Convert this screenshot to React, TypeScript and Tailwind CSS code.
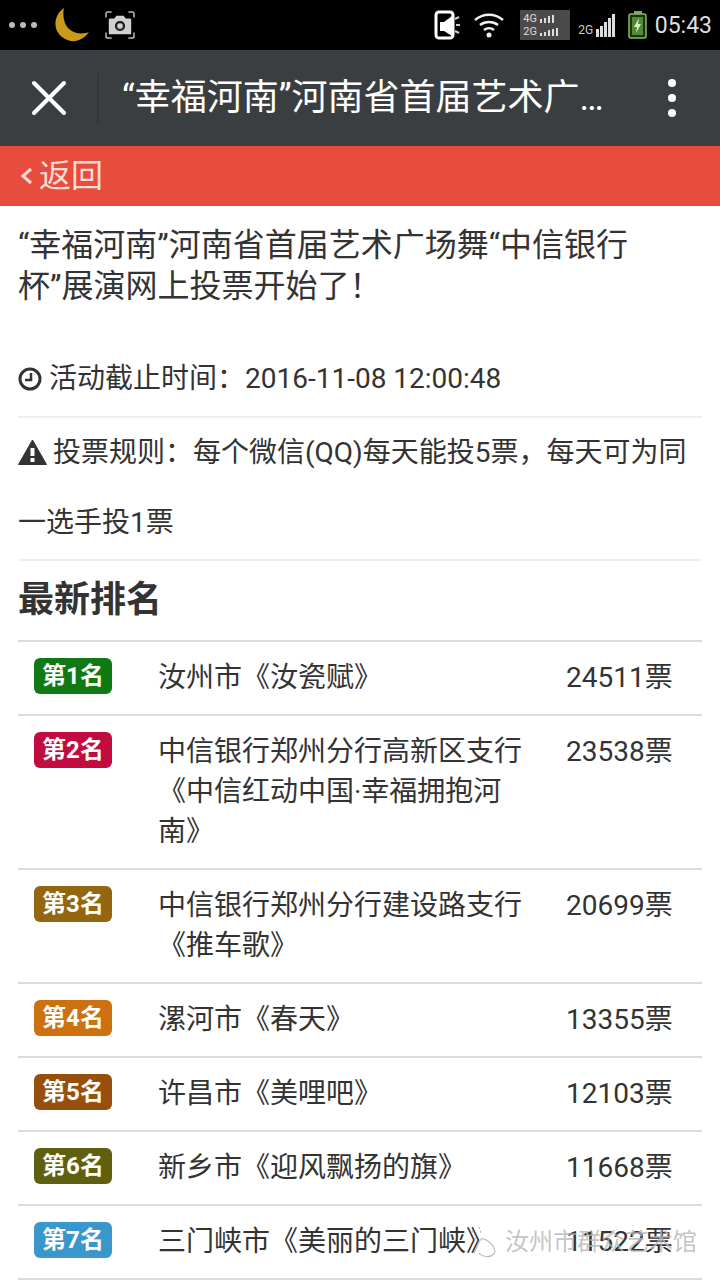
import { X } from "lucide-react";

const rows = [
  { rank: "第1名", color: "bg-[#0f7a14]", name: "汝州市《汝瓷赋》", votes: "24511票" },
  { rank: "第2名", color: "bg-[#c20b3e]", name: "中信银行郑州分行高新区支行《中信红动中国·幸福拥抱河南》", votes: "23538票" },
  { rank: "第3名", color: "bg-[#93660f]", name: "中信银行郑州分行建设路支行《推车歌》", votes: "20699票" },
  { rank: "第4名", color: "bg-[#cc7010]", name: "漯河市《春天》", votes: "13355票" },
  { rank: "第5名", color: "bg-[#97500c]", name: "许昌市《美哩吧》", votes: "12103票" },
  { rank: "第6名", color: "bg-[#5f5f10]", name: "新乡市《迎风飘扬的旗》", votes: "11668票" },
  { rank: "第7名", color: "bg-[#3a97cc]", name: "三门峡市《美丽的三门峡》", votes: "11522票" },
];

function StatusBar() {
  return (
    <div className="h-[50px] bg-black flex items-center pl-[9px] pr-[8px]">
      {/* dots */}
      <div className="flex gap-[5px] w-[30px]">
        <span className="w-[6px] h-[6px] rounded-full bg-[#bbb]" />
        <span className="w-[6px] h-[6px] rounded-full bg-[#bbb]" />
        <span className="w-[6px] h-[6px] rounded-full bg-[#bbb]" />
      </div>
      {/* moon */}
      <svg width="38" height="36" viewBox="0 0 38 36" className="ml-[14px]">
        <path d="M11 1 C1 8 -1 22 9 30 C18 37 29 35 36 25 C25 29 15 24 12 16 C10 10 10 5 11 1Z" fill="#c99a1c" />
      </svg>
      {/* camera */}
      <svg width="30" height="28" viewBox="0 0 32 30" className="ml-[14px]">
        <path d="M1 7V3a2 2 0 0 1 2-2h4M25 1h4a2 2 0 0 1 2 2v4M31 23v4a2 2 0 0 1-2 2h-4M7 29H3a2 2 0 0 1-2-2v-4" fill="none" stroke="#bbb" strokeWidth="1.6" />
        <path d="M5 8h5l2-3h8l2 3h5a1 1 0 0 1 1 1v15a1 1 0 0 1-1 1H5a1 1 0 0 1-1-1V9a1 1 0 0 1 1-1Z" fill="#d0d0d0" />
        <circle cx="16" cy="16" r="5.5" fill="#222" />
        <circle cx="16" cy="16" r="3" fill="#d0d0d0" />
      </svg>
      <div className="flex-1" />
      {/* phone with speaker */}
      <svg width="28" height="30" viewBox="0 0 28 30">
        <rect x="2" y="2" width="17" height="26" rx="3" fill="none" stroke="#fff" strokeWidth="3" />
        <path d="M6 12h4l8-6v20l-8-5H6Z" fill="#fff" />
        <path d="M21 9l4-2M22 15h4M21 21l4 2" stroke="#ccc" strokeWidth="2" />
      </svg>
      {/* wifi */}
      <svg width="32" height="26" viewBox="0 0 32 26" className="ml-[11px]">
        <path d="M2 8C10 1 22 1 30 8M7 13C12 9 20 9 25 13M11 18C14 15.500 18 15.500 21 18" fill="none" stroke="#eee" strokeWidth="2.5" />
        <circle cx="16" cy="23" r="2.500" fill="#eee" />
      </svg>
      {/* 4G 2G box */}
      <div className="ml-[15px] w-[50px] h-[30px] bg-[#4a4a4a] flex flex-col justify-center pl-[3px] text-[#ddd] text-[11px] leading-[13px] font-[Roboto,sans-serif]">
        <div className="flex items-center gap-[3px]">
          <span>4G</span>
          <Bars n={4} h={8} color="bg-[#ddd]" />
        </div>
        <div className="flex items-center gap-[3px]">
          <span>2G</span>
          <Bars n={5} h={8} color="bg-[#ddd]" />
        </div>
      </div>
      <div className="ml-[8px] flex items-end gap-[3px] h-[24px]">
        <span className="text-[#ccc] text-[12px] leading-[13px] font-[Roboto,sans-serif]">2G</span>
        <Bars n={5} h={23} color="bg-[#ddd]" />
      </div>
      {/* battery */}
      <svg width="20" height="28" viewBox="0 0 20 28" className="ml-[13px]">
        <rect x="6" y="0" width="8" height="3" fill="#7da35c" />
        <rect x="1" y="3" width="17" height="24" rx="2" fill="#1d3312" stroke="#8fb470" strokeWidth="1.500" />
        <rect x="4" y="6" width="11" height="18" fill="#4f8a35" />
        <path d="M11 7L6 16h3l-1 6 5-9h-3Z" fill="#d7efc0" />
      </svg>
      <span className="ml-[7px] text-[#ddd] text-[23px] leading-none font-[Roboto,sans-serif]">05:43</span>
    </div>
  );
}

function Bars({ n, h, color }: { n: number; h: number; color: string }) {
  return (
    <div className="flex items-end gap-[1.500px]" style={{ height: h }}>
      {Array.from({ length: n }).map((_, i) => (
        <span key={i} className={`w-[2.500px] ${color}`} style={{ height: (h * (i + 2)) / (n + 1) }} />
      ))}
    </div>
  );
}

function ClockIcon() {
  return (
    <svg width="24" height="24" viewBox="0 0 24 24" className="shrink-0">
      <circle cx="12" cy="12" r="10" fill="none" stroke="#333" strokeWidth="3" />
      <path d="M13 6v7H7" fill="none" stroke="#333" strokeWidth="2.500" />
    </svg>
  );
}

function WarnIcon() {
  return (
    <svg width="29" height="26" viewBox="0 0 29 26" className="shrink-0">
      <path d="M14.500 1 L28.500 25.500 H0.500Z" fill="#333" strokeLinejoin="round" stroke="#333" />
      <rect x="12.500" y="9" width="4" height="8" fill="#fff" />
      <rect x="12.500" y="19" width="4" height="4" fill="#fff" />
    </svg>
  );
}

export default function App() {
  return (
    <div className="relative w-[720px] h-[1280px] overflow-hidden bg-white text-[#333] font-['Roboto','Noto_Sans_CJK_SC',sans-serif]">
      <StatusBar />

      {/* nav */}
      <div className="h-[96px] bg-[#3b3e40] flex items-center">
        <div className="w-[97px] flex justify-center">
          <X size={60} strokeWidth={1.6} color="#fff" />
        </div>
        <div className="w-[2px] h-[50px] bg-[#34373a]" />
        <div className="ml-[23px] w-[486px] truncate text-[36px] leading-[48px] text-white">
          “幸福河南”河南省首届艺术广场舞“中信银行杯”展演网上投票开始了！
        </div>
        <div className="ml-[60px] flex flex-col gap-[7px]">
          <span className="w-[8px] h-[8px] rounded-full bg-white" />
          <span className="w-[8px] h-[8px] rounded-full bg-white" />
          <span className="w-[8px] h-[8px] rounded-full bg-white" />
        </div>
      </div>

      {/* back bar */}
      <div className="h-[60px] bg-[#e74c3c] flex items-center pl-[20px] text-[#fbdcd6] text-[32px]">
        <svg width="14" height="20" viewBox="0 0 14 20">
          <path d="M11 3L3 10l8 7" fill="none" stroke="#fbdcd6" strokeWidth="3" />
        </svg>
        <span className="ml-[5px]">返回</span>
      </div>

      {/* content */}
      <div className="px-[18px]">
        <h1 className="pt-[19px] w-[640px] text-[32px] leading-[41px]">
          “幸福河南”河南省首届艺术广场舞“中信银行杯”展演网上投票开始了！
        </h1>

        <div className="mt-[37px] pb-[2px] border-b-2 border-[#eee] flex items-center gap-[7px] text-[28px] leading-[70px]">
          <ClockIcon />
          <span>活动截止时间：2016-11-08 12:00:48</span>
        </div>

        <div className="pb-[1px] border-b-2 border-[#eee] text-[28px] leading-[70px]">
          <span className="inline-block align-[-3px]">
            <WarnIcon />
          </span>
          <span className="ml-[6px]">投票规则：每个微信(QQ)每天能投5票，每天可为同一选手投1票</span>
        </div>

        <h2 className="mt-[17px] mb-[18px] text-[36px] leading-[44px] font-bold">最新排名</h2>

        <div className="border-t-2 border-[#ddd]">
          {rows.map((row) => (
            <div key={row.rank} className="flex border-b-2 border-[#ddd] px-[16px] py-[16px] text-[28px] leading-[40px]">
              <div className="w-[124px] shrink-0 flex items-start">
                <span className={`flex items-center justify-center w-[78px] h-[36px] rounded-[6px] text-[24px] leading-none font-bold text-white ${row.color}`}>
                  {row.rank}
                </span>
              </div>
              <div className="w-[376px] shrink-0">{row.name}</div>
              <div className="ml-[32px] whitespace-nowrap">{row.votes}</div>
            </div>
          ))}
        </div>
      </div>

      {/* watermark */}
      <div className="absolute left-[470px] top-[1224px] flex items-center gap-[9px] text-[24px] leading-[36px] text-[#b5b5b5]/80">
        <svg width="26" height="34" viewBox="0 0 26 34" fill="none" stroke="#bbb" strokeWidth="1.200">
          <path d="M4 28C8 20 10 12 14 14C20 16 27 24 24 29C20 33 12 32 9 28" />
          <path d="M5 13l3 2M9 2l2 6M2 6l3 3" strokeDasharray="2 2" />
        </svg>
        <span>汝州市群众艺术馆</span>
      </div>
    </div>
  );
}
